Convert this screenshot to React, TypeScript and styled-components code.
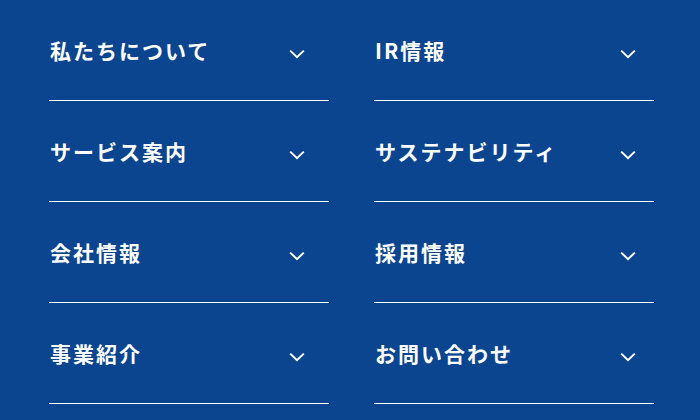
import React from "react";
import styled, { createGlobalStyle } from "styled-components";

const GlobalStyle = createGlobalStyle`
  html, body {
    margin: 0;
    padding: 0;
    background: #0c458f;
  }
  body {
    font-family: "Noto Sans CJK JP", "Noto Sans", sans-serif;
  }
`;

const Page = styled.nav`
  width: 700px;
  height: 420px;
  background: #0c458f;
  box-sizing: border-box;
  padding-left: 49px;
  display: grid;
  grid-template-columns: 280px 280px;
  column-gap: 45px;
  align-content: start;
  overflow: hidden;
`;

const Column = styled.ul`
  list-style: none;
  margin: 0;
  padding: 0;
  display: flex;
  flex-direction: column;
`;

const Item = styled.li<{ $padRight: number }>`
  box-sizing: content-box;
  height: 65px;
  border-bottom: 1px solid #ffffff;
  display: flex;
  align-items: flex-start;
  justify-content: space-between;
  padding: 35px ${(p) => p.$padRight}px 0 1px;
`;

const Label = styled.span`
  color: #ffffff;
  font-size: 21px;
  font-weight: 700;
  letter-spacing: 2px;
  line-height: 30px;
`;

const Chevron = styled.svg`
  width: 16px;
  height: 10px;
  margin-top: 14px;
  flex: none;
`;

const ChevronIcon = () => (
  <Chevron viewBox="0 0 16 10" fill="none">
    <path d="M1.2 1.6 L8 8.2 L14.8 1.6" stroke="#fff" strokeWidth="2" />
  </Chevron>
);

const columns = [
  { pad: 24, items: ["私たちについて", "サービス案内", "会社情報", "事業紹介"] },
  { pad: 18, items: ["IR情報", "サステナビリティ", "採用情報", "お問い合わせ"] },
];

export default function App() {
  return (
    <>
      <GlobalStyle />
      <Page>
        {columns.map((col, i) => (
          <Column key={i}>
            {col.items.map((t) => (
              <Item key={t} $padRight={col.pad}>
                <Label>{t}</Label>
                <ChevronIcon />
              </Item>
            ))}
          </Column>
        ))}
      </Page>
    </>
  );
}
